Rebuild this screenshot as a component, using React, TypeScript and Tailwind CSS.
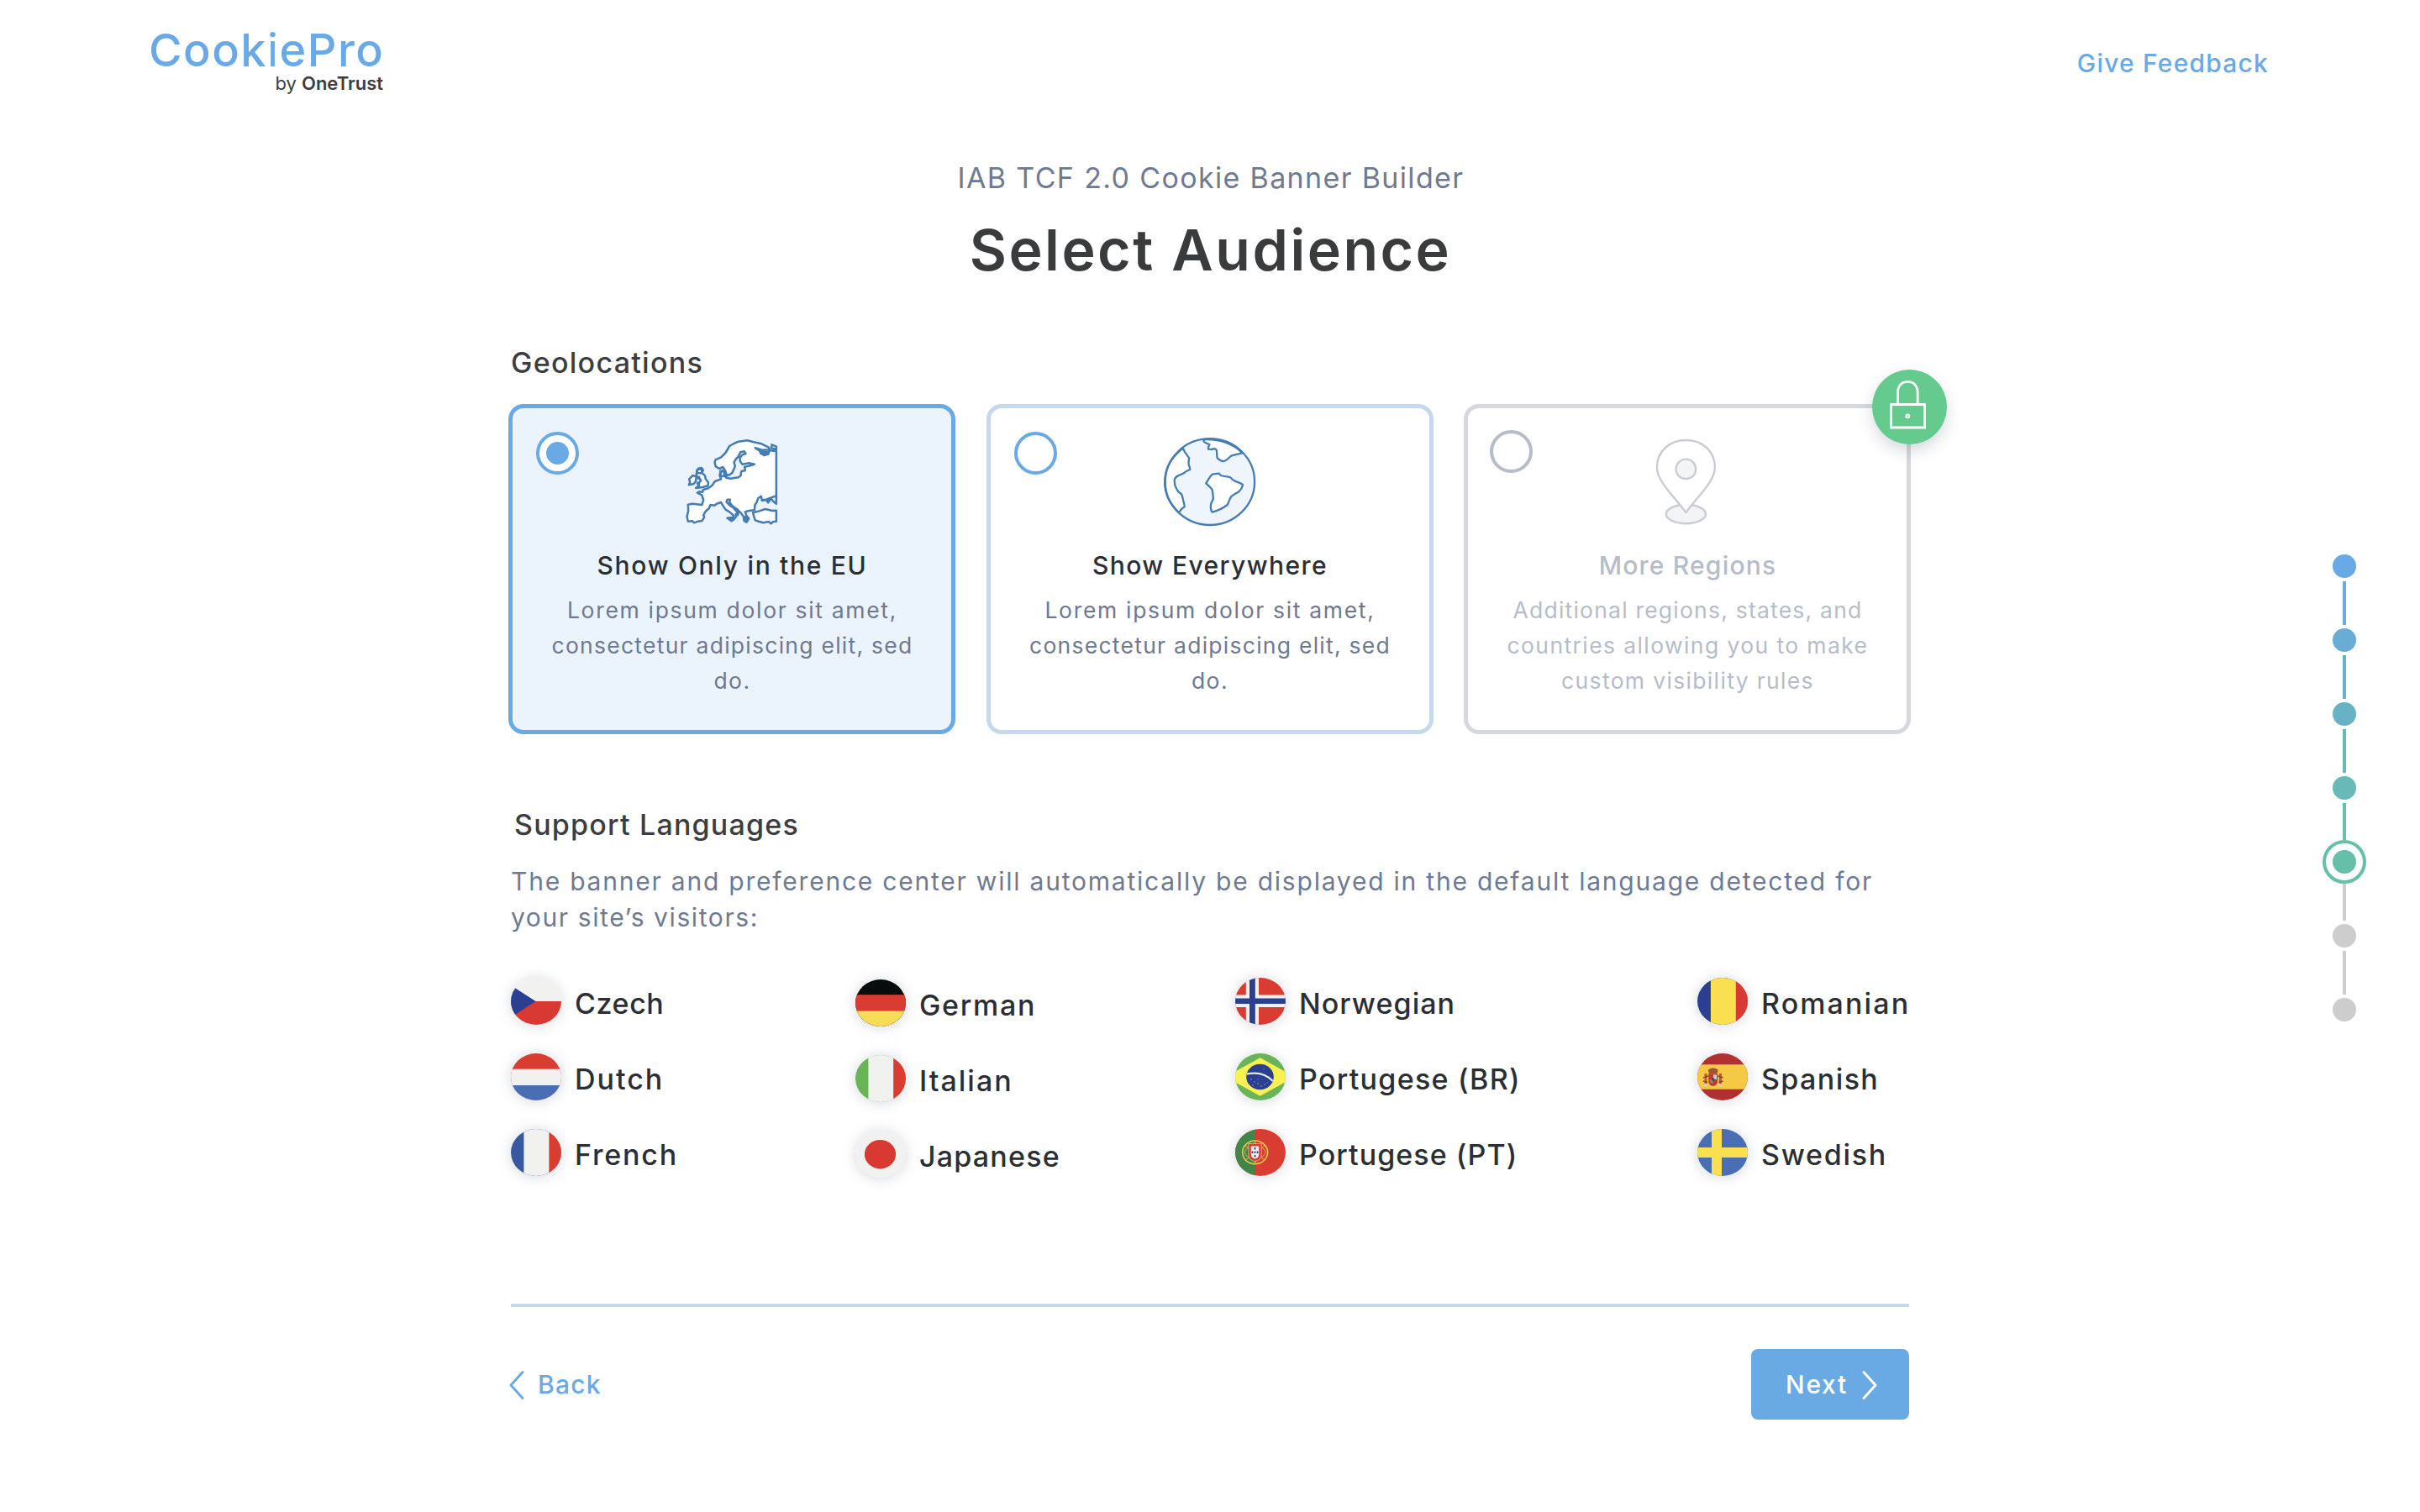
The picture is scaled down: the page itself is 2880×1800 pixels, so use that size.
import React from 'react';

type Spaced = { text: string; tracking: string };

function EuropeIcon() {
  return (
    <svg className="h-[108px] w-[110px]" viewBox="79.5 60 330 324" fill="#fff" stroke="#457db3" strokeWidth="7.6" strokeLinejoin="round" strokeLinecap="round">
      <path d="M403 95V299L392 290L384 280L374 295L366 284L352 288L349 272L338 280L333 294L327 303L325 322L306 324L292 328L296 341L305 352L297 365L288 360L286 344L276 331L262 318L247 308L236 293L238 284L228 284L225 293L236 304L248 312L258 323L268 331L265 340L258 336L259 346L248 358L250 341L236 328L222 320L212 305L206 294L190 299L184 305L168 303L163 315L150 327L143 340L146 347L138 360L124 362L110 367L104 361L88 362L84 345L89 325L88 302L104 299L138 303L143 285L137 268L121 260L128 256L140 257L142 249L160 244L173 235L184 219L206 211L201 198L204 182L217 181L216 195L224 206L240 209L268 205L276 199L278 184L292 180L290 167L304 164L325 158L306 154L282 158L274 148L273 136L282 124L294 120L289 112L275 115L268 130L260 138L252 151L256 165L246 188L236 196L226 199L222 183L212 168L200 174L187 166L183 152L186 142L206 133L222 117L236 93L252 84L268 77L300 73L322 79L350 85L376 98L380 106L352 107L328 100L344 110L348 120L360 125L374 122L380 108L396 111L399 104L386 100L387 88L403 95Z" />
      <path d="M119 185L125 173L136 171L142 179L137 189L148 198L151 211L160 223L159 235L140 240L116 243L128 233L121 226L132 218L128 205L117 199Z" />
      <path d="M92 211L105 198L117 202L116 218L108 228L91 232L95 222Z" />
      <path d="M320 330L340 326L364 318L388 324L403 323V362L392 363L384 370L376 363L356 367L340 362L328 358L323 344Z" />
      <path d="M228 350L248 348L243 361Z M289 346L303 350L296 364Z M346 113L376 115L360 126Z" fill="#457db3" />
      <path d="M204 184L216 183L217 200L205 202Z M120 178L136 174L138 190L122 190Z M355 285L378 286M372 282L400 272M265 320L262 338M122 207L134 214L126 228" />
    </svg>
  );
}

function GlobeIcon() {
  return (
    <svg className="h-[108px] w-[110px]" viewBox="0 0 110 108" fill="none" stroke="#457db3" strokeWidth="2.3" strokeLinejoin="round" strokeLinecap="round">
      <ellipse cx="54.9" cy="53.6" rx="53.2" ry="51.4" fill="#eff5fc" stroke="none" />
      <g transform="translate(-225 -60) scale(.3635 .33333)">
        <path vectorEffect="non-scaling-stroke" fill="#fff" d="M682 221C686 235 696 246 702 256C701 264 699 272 701 280C703 287 705 291 705 297C698 300 693 301 688 307C682 314 674 313 666 319C660 322 655 328 654 334C654 346 654 353 659 362C663 369 664 376 671 380C681 385 679 394 682 404C684 414 687 422 687 430C681 434 676 438 673 444L668 450C600 380 610 280 682 221Z" />
        <path vectorEffect="non-scaling-stroke" fill="#fff" d="M750 190V197L758 203L769 207L765 216V224L776 225C784 221 789 222 792 228C794 238 791 248 795 257C801 263 808 268 815 267C824 266 831 255 840 248C851 243 862 242 876 238C850 205 800 187 750 190Z" />
        <path vectorEffect="non-scaling-stroke" fill="#fff" d="M757 346C764 335 770 322 778 314L799 311L806 318C818 323 826 321 835 324C841 328 845 334 850 337C860 341 869 345 878 351C876 360 872 368 866 375C858 380 849 386 841 392C834 400 832 414 827 423C814 434 796 444 778 449C772 442 772 434 773 423C774 414 779 408 781 401C780 390 780 378 777 368C772 360 763 353 757 346Z" />
      </g>
      <ellipse cx="54.9" cy="53.6" rx="53.2" ry="51.4" />
    </svg>
  );
}

function PinIcon() {
  return (
    <svg className="h-[108px] w-[110px]" viewBox="0 0 110 108" fill="#f3f4f6" stroke="#c9ccd4" strokeWidth="2.4" strokeLinejoin="round">
      <ellipse cx="53.4" cy="92" rx="23.6" ry="11.2" />
      <path fill="#fff" d="M53.4 90C39.500 71 18.900 53 18.900 36.5C18.900 16.5 34.500 4 53.400 4C72.300 4 87.900 16.500 87.900 36.500C87.900 53 67.300 71 53.400 90Z" />
      <circle cx="53.4" cy="38.4" r="11.8" />
    </svg>
  );
}

function LockBadge() {
  return (
    <div className="absolute -top-[46px] -right-[48px] flex h-[89px] w-[89px] items-center justify-center rounded-full bg-[#64ca8e] shadow-[0_8px_18px_rgba(70,85,105,0.22)]">
      <svg className="h-[89px] w-[89px]" viewBox="0 0 89 89" fill="none" stroke="#fff" strokeWidth="2.8">
        <path d="M22.500 41.500H62.500V69H22.500Z" />
        <path d="M30.500 41.500V27C30.500 19 35.500 14.400 42.300 14.400C49.100 14.400 54.100 19 54.100 27V41.500" />
        <circle cx="42.300" cy="55.300" r="1.900" strokeWidth="2" />
      </svg>
    </div>
  );
}

function Card({ title, lines, icon, variant }: { title: Spaced; lines: Spaced[]; icon: React.ReactNode; variant: 'selected' | 'open' | 'locked' }) {
  const frame = {
    selected: 'border-[#69a9e4] bg-[#ebf4fc]',
    open: 'border-[#c6d8eb] bg-white',
    locked: 'border-[#d6d8dd] bg-white',
  }[variant];
  const radio = {
    selected: 'left-[28px] top-[28px] border-[#69a9e4]',
    open: 'left-[28px] top-[28px] border-[#69a9e4]',
    locked: 'left-[26px] top-[26px] border-[#b6bcc8]',
  }[variant];
  const locked = variant === 'locked';
  return (
    <div className={`relative flex h-[393px] w-[532px] flex-col items-center rounded-[18px] border-[5px] pt-[34px] ${frame}`}>
      <div className={`absolute flex h-[51px] w-[51px] items-center justify-center rounded-full border-4 bg-white ${radio}`}>
        {variant === 'selected' && <div className="h-[27px] w-[27px] rounded-full bg-[#69a9e4]" />}
      </div>
      {icon}
      <h3 className={`mt-[28px] pl-[1px] text-[30px] leading-[35px] font-medium ${title.tracking} ${locked ? 'text-[#b6bcc8]' : 'text-[#2b2f33]'}`}>{title.text}</h3>
      <div className={`mt-[14px] text-center text-[26.5px] leading-[42px] whitespace-nowrap ${locked ? 'text-[#b6bcc8]' : 'text-[#6e7891]'}`}>
        {lines.map((l) => (
          <p key={l.text} className={`pl-[1px] ${l.tracking}`}>{l.text}</p>
        ))}
      </div>
      {locked && <LockBadge />}
    </div>
  );
}

const RED = '#d93d32';
const WHITE = '#f1f1ef';
const NAVY = '#2a3e92';
const BLUE = '#496eb3';
const GREEN = '#68b456';
const YELLOW = '#fae050';

function Bands({ colors, at, vertical }: { colors: string[]; at: [number, number]; vertical?: boolean }) {
  const stops = [0, at[0], at[1], 60];
  return (
    <>
      {colors.map((c, i) =>
        vertical ? (
          <rect key={i} x={stops[i]} y="0" width={60 - stops[i]} height="56" fill={c} />
        ) : (
          <rect key={i} x="0" y={stops[i]} width="60" height={60 - stops[i]} fill={c} />
        ),
      )}
    </>
  );
}

const flags: Record<string, React.ReactNode> = {
  cz: (
    <>
      <path fill={WHITE} d="M0 0H60V28H0Z" />
      <path fill="#d83933" d="M0 28H60V56H0Z" />
      <path fill={NAVY} d="M0 9L29.500 28L0 47Z" />
    </>
  ),
  nl: <Bands colors={[RED, WHITE, BLUE]} at={[18.7, 38]} />,
  fr: <Bands vertical colors={['#3659a2', WHITE, RED]} at={[15.4, 45.4]} />,
  de: <Bands colors={['#080c0d', RED, '#f6dd58']} at={[18.2, 37.600]} />,
  it: <Bands vertical colors={[GREEN, WHITE, RED]} at={[15.4, 45.2]} />,
  jp: (
    <>
      <rect width="60" height="56" fill={WHITE} />
      <ellipse cx="29.500" cy="28.200" rx="18.600" ry="17.200" fill="#d83933" />
    </>
  ),
  no: (
    <>
      <rect width="60" height="56" fill={RED} />
      <path fill={WHITE} d="M12.800 0H28V56H12.800ZM0 20.400H60V35H0Z" />
      <path fill={NAVY} d="M17 0H23.800V56H17ZM0 24.600H60V31H0Z" />
    </>
  ),
  br: (
    <>
      <rect width="60" height="56" fill={GREEN} />
      <path fill="#f9f052" d="M29.700 5.300L71 28L29.700 50.700L-12 28Z" />
      <ellipse cx="29.500" cy="28" rx="16.300" ry="15.200" fill={NAVY} />
      <path d="M13.600 24.600Q33 20.500 44.800 33" fill="none" stroke="#dfe9e6" strokeWidth="2.400" />
      <path d="M19 30V32M23 33V35M21 37V39M27 35V37M31 38V40M35 36V38M38 34V35.500M27 30V31M34 18V19.500" stroke="#7c8cc4" strokeWidth="1" />
    </>
  ),
  pt: (
    <>
      <rect width="60" height="56" fill={RED} />
      <rect width="23.600" height="56" fill="#428548" />
      <ellipse cx="23.600" cy="27.800" rx="15" ry="13.800" fill="none" stroke="#e3c64a" strokeWidth="1.600" />
      <ellipse cx="23.600" cy="27.800" rx="12.500" ry="7" fill="none" stroke="#d9b83f" strokeWidth="1" />
      <path d="M12 20L35 37M35 20L12 37M23.600 14V42" stroke="#e3c64a" strokeWidth="1" />
      <path fill={RED} stroke="#f1e6b8" strokeWidth=".6" d="M15.800 17.500H31.200V30Q31.200 37.500 23.500 38.500Q15.800 37.500 15.800 30Z" />
      <path fill={WHITE} d="M18.800 20.500H28.200V30Q28.200 34.500 23.500 35.500Q18.800 34.500 18.800 30Z" />
      <path fill={NAVY} d="M22.600 22H24.400V24.500H22.600ZM22.600 26.500H24.400V29H22.600ZM22.600 31H24.400V33.500H22.600ZM19.600 26.500H21.300V29H19.600ZM25.700 26.500H27.400V29H25.700Z" />
    </>
  ),
  ro: <Bands vertical colors={[NAVY, YELLOW, '#d83933']} at={[15.9, 45.8]} />,
  es: (
    <>
      <rect width="60" height="56" fill="#b03130" />
      <rect y="13.300" width="60" height="29.400" fill="#f6c944" />
      <path fill="#a8642f" d="M8.500 24H11.500V38H8.500ZM26 24H29V38H26Z" />
      <path fill="#d9cbb0" d="M8 36H12V39H8ZM25.500 36H29.500V39H25.500Z" />
      <path stroke="#b03130" strokeWidth="1.500" fill="none" d="M7 29L13 27M30.500 29L24.500 27M7 33L12 34.500M30.500 33L25.500 34.500" />
      <path fill="#b5482f" d="M13 21Q12 18 18.700 17.500Q25.500 18 24.500 21L23.500 24H14Z" />
      <path fill="#7d6a3a" d="M15 19.800H22.500V21.500H15Z" />
      <path fill="#c0392f" stroke="#9b6b43" strokeWidth=".8" d="M13.500 24.500H24V33Q24 38 18.700 38.800Q13.500 38 13.500 33Z" />
      <path fill="#d8c9d0" d="M18.900 25.500H23V31H18.900Z" />
      <path fill="#8f8a5c" d="M14.500 31H18.600V36.500Q14.500 35 14.500 31Z" />
      <ellipse cx="18.800" cy="31" rx="1.800" ry="2" fill="#3a4a90" />
    </>
  ),
  se: (
    <>
      <rect width="60" height="56" fill={BLUE} />
      <path fill={YELLOW} d="M17 0H29V56H17ZM0 22H60V34H0Z" />
    </>
  ),
};

type Lang = { code: string; name: string; tracking: string };
const columns: Lang[][] = [
  [
    { code: 'cz', name: 'Czech', tracking: 'tracking-[0.6px]' },
    { code: 'nl', name: 'Dutch', tracking: 'tracking-[2px]' },
    { code: 'fr', name: 'French', tracking: 'tracking-[1.8px]' },
  ],
  [
    { code: 'de', name: 'German', tracking: 'tracking-[1.7px]' },
    { code: 'it', name: 'Italian', tracking: 'tracking-[2px]' },
    { code: 'jp', name: 'Japanese', tracking: 'tracking-[1.2px]' },
  ],
  [
    { code: 'no', name: 'Norwegian', tracking: 'tracking-[1.05px]' },
    { code: 'br', name: 'Portugese (BR)', tracking: 'tracking-[1.28px]' },
    { code: 'pt', name: 'Portugese (PT)', tracking: 'tracking-[1.05px]' },
  ],
  [
    { code: 'ro', name: 'Romanian', tracking: 'tracking-[2.1px]' },
    { code: 'es', name: 'Spanish', tracking: 'tracking-[1.4px]' },
    { code: 'se', name: 'Swedish', tracking: 'tracking-[1.7px]' },
  ],
];

function Language({ lang }: { lang: Lang }) {
  return (
    <li className="flex h-[56px] items-start gap-4">
      <span className="block h-[56px] w-[60px] shrink-0 overflow-hidden rounded-[50%] shadow-[0_1px_16px_rgba(80,95,120,0.26)]">
        <svg className="h-full w-full" viewBox="0 0 60 56" preserveAspectRatio="none">{flags[lang.code]}</svg>
      </span>
      <span className={`text-[34px] leading-[62px] font-medium whitespace-nowrap text-[#2b2f33] ${lang.tracking}`}>{lang.name}</span>
    </li>
  );
}

function Dot({ color }: { color: string }) {
  return <div className={`h-[28px] w-[28px] shrink-0 rounded-full ${color}`} />;
}

function Stepper() {
  return (
    <div className="mt-[468px] mr-[64px] flex w-[52px] flex-col items-center justify-self-end">
      <Dot color="bg-[#69a9e6]" />
      <div className="my-1 h-[52px] w-1 bg-[#69abe0]" />
      <Dot color="bg-[#69add6]" />
      <div className="my-1 h-[52px] w-1 bg-[#68b2cc]" />
      <Dot color="bg-[#68b2c5]" />
      <div className="my-1 h-[52px] w-1 bg-[#67b8bd]" />
      <Dot color="bg-[#68b9b8]" />
      <div className="mt-1 h-[44px] w-1 bg-[#66c0ab]" />
      <div className="flex h-[52px] w-[52px] items-center justify-center rounded-full border-4 border-[#66c0a9]">
        <Dot color="bg-[#66c0a9]" />
      </div>
      <div className="mb-1 h-[44px] w-1 bg-[#cdcdcd]" />
      <Dot color="bg-[#cdcdcd]" />
      <div className="my-1 h-[52px] w-1 bg-[#cdcdcd]" />
      <Dot color="bg-[#cdcdcd]" />
    </div>
  );
}

export default function App() {
  return (
    <div className="h-[1800px] w-[2880px] overflow-hidden bg-white font-['Inter',sans-serif]">
      <header className="flex h-[192px] justify-between pr-[180px] pl-[177px]">
        <div className="w-[279px] pt-[33px]">
          <div className="text-[54px] leading-[54px] font-medium tracking-[1.5px] whitespace-nowrap text-[#69a9e6]">
            Cook<span className="font-normal">i</span>ePro
          </div>
          <div className="mt-[1px] text-right text-[22px] leading-[22px] whitespace-nowrap text-[#3c3d3f]">
            by <span className="font-semibold">OneTrust</span>
          </div>
        </div>
        <a className="pt-[57px] text-[30px] leading-[36px] font-medium tracking-[1.2px] text-[#69a9e6]">Give Feedback</a>
      </header>

      <div className="grid grid-cols-[608px_1664px_608px]">
        <main className="col-start-2">
          <p className="pl-[2px] text-center text-[34px] leading-[40px] tracking-[1.35px] text-[#6e7a92]">IAB TCF 2.0 Cookie Banner Builder</p>
          <h1 className="mt-[25px] pl-[1px] text-center text-[68px] leading-[80px] font-semibold tracking-[2.5px] text-[#3a3b3d]">Select Audience</h1>

          <h2 className="mt-[74px] text-[34px] leading-[41px] font-medium tracking-[1.28px] text-[#3c3d3f]">Geolocations</h2>
          <section className="-mr-[2px] -ml-[3px] mt-[29px] flex justify-between">
            <Card
              variant="selected"
              icon={<EuropeIcon />}
              title={{ text: 'Show Only in the EU', tracking: 'tracking-[1.69px]' }}
              lines={[
                { text: 'Lorem ipsum dolor sit amet,', tracking: 'tracking-[1.68px]' },
                { text: 'consectetur adipiscing elit, sed', tracking: 'tracking-[1.26px]' },
                { text: 'do.', tracking: 'tracking-[1.5px]' },
              ]}
            />
            <Card
              variant="open"
              icon={<GlobeIcon />}
              title={{ text: 'Show Everywhere', tracking: 'tracking-[1.4px]' }}
              lines={[
                { text: 'Lorem ipsum dolor sit amet,', tracking: 'tracking-[1.68px]' },
                { text: 'consectetur adipiscing elit, sed', tracking: 'tracking-[1.26px]' },
                { text: 'do.', tracking: 'tracking-[1.5px]' },
              ]}
            />
            <Card
              variant="locked"
              icon={<PinIcon />}
              title={{ text: 'More Regions', tracking: 'tracking-[1.2px]' }}
              lines={[
                { text: 'Additional regions, states, and', tracking: 'tracking-[1.22px]' },
                { text: 'countries allowing you to make', tracking: 'tracking-[1.4px]' },
                { text: 'custom visibility rules', tracking: 'tracking-[1.34px]' },
              ]}
            />
          </section>

          <h2 className="mt-[88px] ml-[4px] text-[34px] leading-[40px] font-medium tracking-[1.2px] text-[#3c3d3f]">Support Languages</h2>
          <p className="mt-[26px] text-[30px] leading-[43px] tracking-[1.78px] whitespace-nowrap text-[#6e7a92]">
            The banner and preference center will automatically be displayed in the default language detected for
            <br />
            <span className="tracking-[1.6px]">your site’s visitors:</span>
          </p>

          <div className="mt-[50px] grid h-[236px] grid-cols-[410px_452px_550px_252px]">
            {columns.map((col, i) => (
              <ul key={i} className={`flex flex-col gap-[34px] ${i === 1 ? 'mt-[2px]' : ''}`}>
                {col.map((lang) => (
                  <Language key={lang.code} lang={lang} />
                ))}
              </ul>
            ))}
          </div>

          <div className="mt-[152px] h-1 bg-[#c6d8eb]" />

          <footer className="mt-[50px] flex justify-between text-[30px] font-medium">
            <button className="-ml-[3px] flex h-[84px] items-center gap-[15px] text-[#69a9e6]">
              <svg className="mt-[2px] h-[36px] w-[20px]" viewBox="0 0 20 36" fill="none" stroke="currentColor" strokeWidth="2.900" strokeLinecap="round" strokeLinejoin="round">
                <path d="M17 2.500L3 18L17 33.500" />
              </svg>
              <span className="mt-[1px] tracking-[1.25px]">Back</span>
            </button>
            <button className="flex h-[84px] w-[188px] items-center justify-between rounded-[8px] bg-[#69a9e4] pr-[37px] pl-[41px] text-white">
              <span className="mt-[1px] tracking-[1.7px]">Next</span>
              <svg className="mt-[2px] h-[36px] w-[20px]" viewBox="0 0 20 36" fill="none" stroke="currentColor" strokeWidth="2.900" strokeLinecap="round" strokeLinejoin="round">
                <path d="M3 2.500L17 18L3 33.500" />
              </svg>
            </button>
          </footer>
        </main>
        <Stepper />
      </div>
    </div>
  );
}
